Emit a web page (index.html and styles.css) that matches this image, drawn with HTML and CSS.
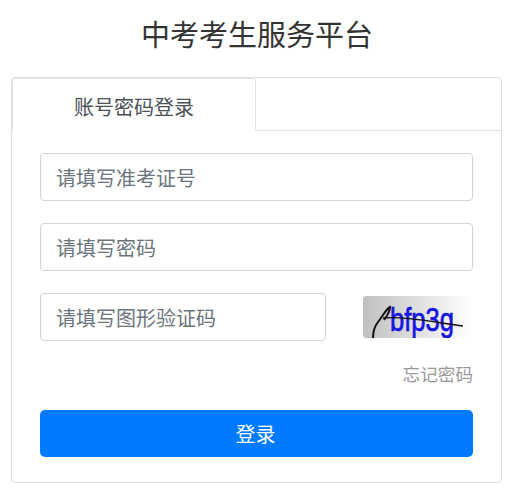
FILE: index.html
```html
<!DOCTYPE html>
<html lang="zh-CN">

<head>
    <meta charset="UTF-8">
    <meta name="viewport" content="width=device-width, initial-scale=1.0">
    <title>中考考生服务平台</title>
    <link rel="stylesheet" href="styles.css">
</head>

<body>
    <h1 class="page-title">中考考生服务平台</h1>
    <div class="login-card">
        <div class="tab-bar">
            <div class="tab-active">账号密码登录</div>
        </div>
        <form class="login-form">
            <input class="text-input" type="text" placeholder="请填写准考证号">
            <input class="text-input" type="password" placeholder="请填写密码">
            <div class="captcha-row">
                <input class="text-input captcha-input" type="text" placeholder="请填写图形验证码">
                <svg class="captcha-img" width="109" height="42" viewBox="0 0 109 42">
                    <defs>
                        <linearGradient id="captchaBg" x1="0" y1="0" x2="1" y2="0">
                            <stop offset="0" stop-color="#c0c0c0" />
                            <stop offset="1" stop-color="#ffffff" />
                        </linearGradient>
                    </defs>
                    <rect width="109" height="42" rx="3" fill="url(#captchaBg)" />
                    <text class="captcha-text" x="27" y="35" textLength="64" lengthAdjust="spacingAndGlyphs">bfp3g</text>
                    <path d="M10 42 C10 35 11 31 15 26 C20 20 23 13 27 11 C27 15 24 20 21 24" fill="none" stroke="#111" stroke-width="2" />
                    <path d="M20 22 C40 20 70 26 100 30" fill="none" stroke="#111" stroke-width="1.4" />
                </svg>
            </div>
            <div class="forgot-row">忘记密码</div>
            <button class="submit-btn" type="button">登录</button>
        </form>
    </div>
</body>

</html>
```

FILE: styles.css
```css
body {
    font-family: "Noto Sans CJK SC", "Liberation Sans", sans-serif;
    background-color: #ffffff;
    margin: 0;
    padding: 0 8px 0 11px;
}

.page-title {
    height: 77px;
    margin: 0;
    padding-left: 1px;
    font-size: 29px;
    font-weight: 400;
    line-height: 66px;
    text-align: center;
    color: #333333;
}

.login-card {
    width: 489px;
    height: 404px;
    border: 1px solid #dfdfdf;
    border-radius: 4px;
}

.tab-bar {
    display: flex;
    height: 52px;
    border-bottom: 1px solid #dee2e6;
}

.tab-active {
    width: 244px;
    height: 53px;
    box-sizing: border-box;
    border: 1px solid #dee2e6;
    border-bottom: none;
    border-radius: 4px 4px 0 0;
    background-color: #ffffff;
    font-size: 20px;
    line-height: 55px;
    text-align: center;
    color: #495057;
}

.login-form {
    display: flex;
    flex-direction: column;
    padding: 22px 28px 0;
}

.text-input {
    display: block;
    box-sizing: border-box;
    width: 433px;
    height: 48px;
    margin-bottom: 22px;
    padding: 0 15px;
    border: 1px solid #ced4da;
    border-radius: 4px;
    font-family: inherit;
    font-size: 20px;
    color: #495057;
}

.text-input::placeholder {
    color: #6c757d;
    opacity: 1;
}

.captcha-row {
    display: flex;
    justify-content: space-between;
    align-items: center;
    height: 48px;
}

.captcha-input {
    width: 286px;
    margin-bottom: 0;
}

.captcha-img {
    display: block;
    margin-right: 1px;
}

.captcha-text {
    font-family: "Liberation Sans", sans-serif;
    font-size: 33px;
    font-weight: 400;
    fill: #1515e0;
    stroke: #1515e0;
    stroke-width: 0.7px;
}

.forgot-row {
    margin-top: 20px;
    height: 29px;
    font-size: 17.6px;
    line-height: 26px;
    text-align: right;
    color: #999999;
}

.submit-btn {
    display: block;
    width: 433px;
    height: 47px;
    margin-top: 20px;
    padding: 0 2px 0 0;
    border: none;
    border-radius: 5px;
    background-color: #007bff;
    font-family: inherit;
    font-size: 20px;
    color: #ffffff;
}
```
